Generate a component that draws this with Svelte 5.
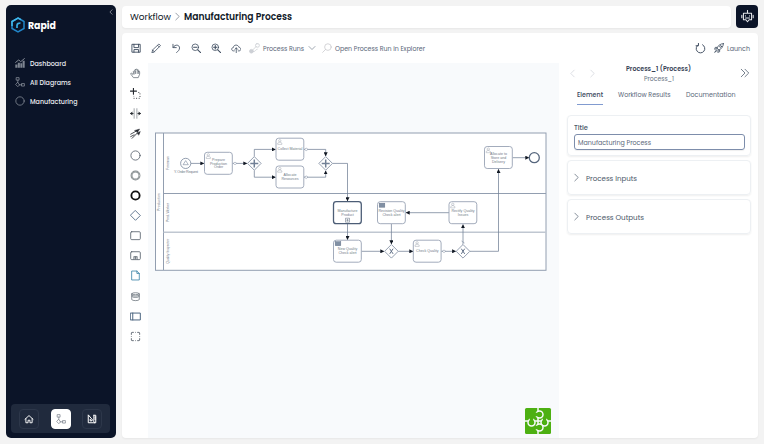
<script>
  const nav = [
    { icon: 'chart', label: 'Dashboard', w: 36 },
    { icon: 'flow', label: 'All Diagrams', w: 41 },
    { icon: 'ring', label: 'Manufacturing', w: 47.5 }
  ];
  const tools = ['save', 'pencil', 'undo', 'zoomout', 'zoomin', 'cloud'];
  const palette = ['hand', 'lasso', 'space', 'connect', 'start', 'mid', 'end', 'gateway', 'task', 'sub', 'doc', 'store', 'pool', 'group'];
  const tasks = [
    { x: 204.5, y: 152.3, k: 'user', t: ['Prepare', 'Production', 'Order'] },
    { x: 276, y: 138.2, k: 'user', t: ['Collect Material'] },
    { x: 276, y: 166, k: 'user', t: ['Allocate', 'Resources'] },
    { x: 484.5, y: 146.5, k: 'user', t: ['Allocate to', 'Store and', 'Delivery'] },
    { x: 333.5, y: 201.7, k: 'call', t: ['Manufacture', 'Product'] },
    { x: 377.5, y: 201.7, k: 'rule', t: ['Revision Quality', 'Check alert'] },
    { x: 449, y: 201.7, k: 'user', t: ['Rectify Quality', 'Issues'] },
    { x: 333.5, y: 240.2, k: 'rule', t: ['New Quality', 'Check alert'] },
    { x: 413.3, y: 240.2, k: 'user', t: ['Check Quality'] }
  ];
  const flows = [
    'M191 163.4H204', 'M232.5 163.4H247', 'M254.3 156.4V149.4H275.5', 'M254.3 170.4V177.2H275.5',
    'M304 149.4H325.7V156', 'M304 177.2H325.7V170.8', 'M332.7 163.4H347.5V201', 'M347.5 224V239.7',
    'M361.5 251.3H384', 'M391.4 224V244', 'M398.4 251.3H413', 'M441.3 251.3H455.8', 'M463 244.3V224.5',
    'M449 212.7H406', 'M470 251.3H498.5V169.3', 'M512.5 157.7H529'
  ];
  const gates = [
    { x: 254.3, y: 163.4, p: true }, { x: 325.7, y: 163.4, p: true },
    { x: 391.4, y: 251.3, p: false }, { x: 463, y: 251.3, p: false }
  ];
</script>

{#snippet icon(name, size = 12)}
  <svg class="icon i-{name}" width={size} height={size} viewBox="0 0 16 16" fill="none" stroke="currentColor" stroke-width="1.2" stroke-linejoin="round" stroke-linecap="round">
    {#if name === 'chart'}
      <path d="M1 7l5-4 3 3 6-5" stroke-width="1.500" /><path d="M.5 10.500h3.300v5H.5zM4.500 7.500h3.300v8H4.500zM8.500 8.500h3v7h-3zM12.200 4.500h3.300v11h-3.300z" fill="currentColor" stroke="none" opacity=".9" />
    {:else if name === 'flow'}
      <rect x="2.500" y="1" width="4" height="4" /><path d="M4.500 5v4M6.500 12.500H11" /><path d="m4.500 9 3 3.500-3 3-3-3z" /><rect x="11" y="10.500" width="4" height="4" />
    {:else if name === 'ring' || name === 'start'}
      <circle cx="8" cy="8" r="6.700" />
    {:else if name === 'mid'}
      <circle cx="8" cy="8" r="5.800" stroke-width="2.800" /><circle cx="8" cy="8" r="5.700" stroke="#dfe2e2" stroke-width=".5" />
    {:else if name === 'end'}
      <circle cx="8" cy="8" r="6" stroke-width="2.700" />
    {:else if name === 'save'}
      <path d="M2 2h12v12H2zM4.500 2v5h7V2M4.500 14v-4h7v4" stroke-width="1.400" />
    {:else if name === 'pencil'}
      <path d="m1.500 14.500 1-4L12 1.500l2.500 2.500-9.500 9.500zM10 3.500 12.500 6M2.500 10.500 5 13.500" />
    {:else if name === 'undo'}
      <path d="M3 2v5h5M3.300 6.500C7 1 13 3 13 7.500c0 3-2 5-4.500 7" stroke-width="1.300" />
    {:else if name === 'zoomout' || name === 'zoomin'}
      <circle cx="6.500" cy="6.500" r="5" /><path d="m10.300 10.300 4.700 4.700M4 6.500h5" stroke-width="1.600" />{#if name === 'zoomin'}<path d="M6.500 4v5" stroke-width="1.600" />{/if}
    {:else if name === 'cloud'}
      <path d="M5 12H3.500C0 11.500.5 7 3.500 7 4 2 11 2 12 6.500c4 .5 4 5.500 0 5.500h-1M8 15V7.500M5.800 9.700 8 7.500l2.200 2.200" />
    {:else if name === 'link'}
      <circle cx="3.500" cy="12" r="2.700" fill="currentColor" /><path d="m5.500 10 5-5" /><rect x="9.500" y="1" width="5.500" height="5" rx="2" /><path d="M7 12.500c3 0 2-3 5-3.500" />
    {:else if name === 'search'}
      <circle cx="9.500" cy="6.500" r="5.300" /><path d="m5.500 10.500-4.500 4.500" />
    {:else if name === 'refresh'}
      <path d="M5 2.500A6.300 6.300 0 1 0 11 2.500M5 .5v3.500H1.500" stroke-width="1.400" />
    {:else if name === 'rocket'}
      <path d="M15 1C10 1 7 4 4.500 8L8 11.500C12 9 15 6 15 1zM5 7H2L1 10l4-1M9 11v3l-3 1 1-4M4 11l-3 4 4-3" stroke-width="1.300" /><circle cx="10.500" cy="5.500" r="1.500" />
    {:else if name === 'hand'}
      <path d="M4 9 2 7.500C.5 7.500 1 9 2 10l3 4h7l2-5V5.500c0-1-1.500-1-1.500 0V3.500c0-1.200-1.700-1.200-1.700 0V2.500c0-1.300-2-1.300-2 0V3c0-1.300-2-1.300-2 .2V5c-1-1.300-2.500-.5-2 1zM8 4v4M10.500 4v4M12.500 5v3M6 6v3" stroke-width="1" />
    {:else if name === 'lasso'}
      <path d="M5 0v9M.5 4.500h9" stroke-width="1.600" /><path d="M12 6.500h2.500V15H5.500v-3.500" stroke-dasharray="1.500 2.300" stroke-linecap="butt" />
    {:else if name === 'space'}
      <path d="M6 1v14M10 1v14" stroke="#8d9298" stroke-width="1.200" /><path d="M4.500 8H1M11.500 8H15" stroke-width="1.300" /><path d="M0 8l3.500-3v6zM16 8l-3.500-3v6z" fill="currentColor" stroke="none" />
    {:else if name === 'connect'}
      <path d="m1 9 9-5M3 15l9-9M1 12.500l5-2.500" /><path d="m7 3.500 7-2-3 4.500zM10.500 7.500l4.500-2.500-2 5z" fill="currentColor" stroke-width=".6" />
    {:else if name === 'gateway'}
      <path d="m8 1 7 7-7 7-7-7z" />
    {:else if name === 'task' || name === 'sub'}
      <rect x="1" y="2.500" width="14" height="11.500" rx="1.500" />{#if name === 'sub'}<path d="M5.500 13.500V9.500h5v4M8 10v3M6.500 11.500h3" stroke-width="1" />{/if}
    {:else if name === 'doc'}
      <path d="M3 1.500h7L13.500 5v9.500H3zM10 1.500V5h3.500" />
    {:else if name === 'store'}
      <path d="M2.500 4v8.500c1 2 10 2 11 0V4c-1-2-10-2-11 0c1 2 10 2 11 0M2.500 6c1 2 10 2 11 0M2.500 8c1 2 10 2 11 0" stroke-width="1" />
    {:else if name === 'pool'}
      <path d="M1 3h14v10H1zM4 3v10" stroke-width="1.400" />
    {:else if name === 'group'}
      <path d="M2 5.500V3q0-1 1-1h2.500M10.500 2H13q1 0 1 1v2.500M14 10.500V13q0 1-1 1h-2.500M5.500 14H3q-1 0-1-1v-2.500M7.500 2h1M7.500 14h1M2 7.500v1M14 7.500v1" stroke-width="1.300" stroke-linecap="butt" />
    {:else if name === 'home'}
      <path d="m1.500 8.500 6.500-6 6.500 6M3 7.500V14h3.500v-4h3v4H13V7.500" stroke-width="1.500" />
    {:else if name === 'design'}
      <path d="M2 2v12h10zM5 9v2h2zM11 2h3v12h-2M11 2v8M12.500 5H14M12.500 8H14" stroke-width="1.600" />
    {:else if name === 'robot'}
      <path d="M8 .5V4M3 4h10v8h-3l-2 2.500L6 12H3zM1 6.500v3M15 6.500v3M5.500 7v.5M10.500 7v.5M5.500 9.800h5" stroke-width="1.300" />
    {:else if name === 'right'}
      <path d="m5 2 6 6-6 6" />
    {:else if name === 'left'}
      <path d="m11 2-6 6 6 6" />
    {:else if name === 'down'}
      <path d="m2 5 6 6 6-6" />
    {:else if name === 'double'}
      <path d="m2 2 6 6-6 6M8 2l6 6-6 6" />
    {/if}
  </svg>
{/snippet}

{#snippet label(text, w, size, weight = 400)}
  <svg class="label" width={w} height="14" style:font-size="{size}px" style:font-weight={weight}><text x="0" y="10" textLength={w} lengthAdjust="spacingAndGlyphs">{text}</text></svg>
{/snippet}

<div class="app">
  <aside>
    <div class="brand">
      <svg width="14" height="16" viewBox="0 0 14 16" fill="none"><path d="M7 1 13 4.500v7L7 15l-6-3.500v-7z" stroke="#2185c9" stroke-width="1.500" /><path d="M1 9V4.500L7 1l3 1.700" stroke="#42b9eb" stroke-width="1.500" /><path d="M6 11V8.500C6 6.500 7.500 6 9.500 6" stroke="#36aee6" stroke-width="1.700" /></svg>
      {@render label('Rapid', 28, 10.500, 700)}
      <span class="collapse">{@render icon('left', 6)}</span>
    </div>
    <nav>
      {#each nav as n}
        <div class="navitem">{@render icon(n.icon, 10)}{@render label(n.label, n.w, 7.400, 500)}</div>
      {/each}
    </nav>
    <div class="dock">
      <span>{@render icon('home', 10)}</span>
      <span class="active">{@render icon('flow', 10)}</span>
      <span>{@render icon('design', 10)}</span>
    </div>
  </aside>

  <div class="content">
    <header>
      <div class="crumbs">{@render label('Workflow', 41, 9.500)}{@render icon('right', 9)}{@render label('Manufacturing Process', 108, 9.600, 600)}</div>
      <div class="bot">{@render icon('robot', 13)}</div>
    </header>

    <main>
      <div class="toolbar">
        <div class="tools">{#each tools as t}{@render icon(t, 10.500)}{/each}</div>
        <div class="runs">{@render icon('link', 11)}{@render label('Process Runs', 41, 7)}{@render icon('down', 8)}</div>
        <div class="open">{@render icon('search', 10)}{@render label('Open Process Run in Explorer', 90, 7)}</div>
        <div class="launch">{@render icon('refresh', 11)}{@render icon('rocket', 10)}{@render label('Launch', 23, 7)}</div>
      </div>
      <div class="work">
        <div class="palette">{#each palette as p}<span>{@render icon(p, 11)}</span>{/each}</div>
        <div class="canvas">
          <svg width="411" height="375" viewBox="148 63 411 375">
            <defs><marker id="arrow" viewBox="0 0 6 6" refX="5.500" refY="3" markerUnits="userSpaceOnUse" markerWidth="4" markerHeight="4" orient="auto"><path d="M0 0 6 3 0 6z" fill="#101722" /></marker></defs>
            <g fill="#fff" stroke="#929eb0">
              <rect x="155.500" y="133" width="390.500" height="137.300" />
              <path d="M163.500 133v137M163.500 193.500H546" />
              <path d="M163.500 232.200H546" stroke-width="1.500" stroke="#c0c7d1" />
            </g>
            <g class="lane"><text transform="translate(160.300 202) rotate(-90)" textLength="18">Production</text><text transform="translate(168.900 163) rotate(-90)" textLength="14">Foreman</text><text transform="translate(168.900 212.500) rotate(-90)" textLength="19">Prod. Worker</text><text transform="translate(168.900 251.300) rotate(-90)" textLength="25">Quality Inspector</text></g>
            {#each flows as d}<path {d} fill="none" stroke="#718096" stroke-width=".75" marker-end="url(#arrow)" />{/each}
            {#each tasks as t}
              <rect x={t.x} y={t.y} width="27.800" height="22" rx="2.700" fill="#fff" stroke={t.k === 'call' ? '#4c5d76' : '#98a3b4'} stroke-width={t.k === 'call' ? 1.300 : .9} />
              {#if t.k === 'user'}
                <g fill="none" stroke="#8a929e" stroke-width=".4"><circle cx={t.x + 3.800} cy={t.y + 2.600} r="1.200" /><path d="M{t.x + 1.700} {t.y + 6.200}v-1.300q2.100-2.300 4.200 0v1.300z" /></g>
              {:else if t.k === 'rule'}
                <rect x={t.x + 1.700} y={t.y + 1.500} width="5.600" height="4" fill="#8190a4" stroke="#66768c" stroke-width=".5" />
              {:else}
                <path d="M{t.x + 12} {t.y + 16.500}h4v4h-4zM{t.x + 14} {t.y + 17.200}v2.600M{t.x + 12.700} {t.y + 18.500}h2.600" fill="#fff" stroke="#566477" stroke-width=".5" />
              {/if}
              {#each t.t as line, i}<text class="step" x={t.x + 14} y={t.y + 12.200 + (i - (t.t.length - 1) / 2) * 3.900}>{line}</text>{/each}
            {/each}
            {#each gates as g}
              <path d="M{g.x - 6.800} {g.y}l6.800-6.800 6.800 6.800-6.800 6.800z" fill="#fff" stroke="#78879c" stroke-width=".8" />
              {#if g.p}<path d="M{g.x - 4} {g.y}h8M{g.x} {g.y - 4}v8" stroke="#718096" stroke-width="1.500" />{:else}<path d="M{g.x - 1.700} {g.y - 2.600}l3.400 5.200M{g.x + 1.700} {g.y - 2.600}l-3.400 5.200" stroke="#627188" stroke-width="1" />{/if}
            {/each}
            <g fill="#fff" stroke="#78879c" stroke-width=".8">
              <circle cx="185.700" cy="163.400" r="5.100" /><path d="m185.700 160.600 2.600 4.100h-5.200z" stroke-width=".6" />
              <circle cx="534.300" cy="157.700" r="5" stroke="#56667d" stroke-width="1.300" />
              {#each [[235, 163.400], [306.200, 149.400], [306.200, 177.200], [444, 251.300]] as c}<path d="M{c[0] - 1.800} {c[1]}l1.800-1.300 1.800 1.300-1.800 1.300z" stroke-width=".5" />{/each}
              <path d="m461.500 241 3 2" stroke-width=".6" />
            </g>
            <text class="step" x="186" y="172.600" textLength="24">Y. Order Request</text>
          </svg>
          <svg class="mark" width="28" height="28" viewBox="0 0 28 28">
            <rect x="1" y="1" width="26" height="26" rx="1.500" fill="#4db012" />
            <path d="M14 1v26M1 14h26" stroke="#f8fafc" stroke-width="1.500" />
            <g fill="#4db012" stroke="#f8fafc" stroke-width="1.500">
              <circle cx="15.500" cy="7.500" r="3.500" /><circle cx="7.500" cy="15.500" r="3.500" />
              <circle cx="20.500" cy="15.500" r="3.500" /><circle cx="15.500" cy="20.500" r="3.500" />
            </g>
            <path d="M11 5.800h4v3.400h-4zM5.800 11h3.400v4H5.800zM18.800 11h3.400v4h-3.400zM11 18.800h4v3.400h-4z" fill="#4db012" />
          </svg>
        </div>
        <section>
          <div class="title">
            <span class="arrows">{@render icon('left', 9)}{@render icon('right', 9)}</span>
            <div class="names">{@render label('Process_1 (Process)', 65, 7, 600)}{@render label('Process_1', 30, 6.500)}</div>
            {@render icon('double', 10)}
          </div>
          <div class="tabs"><span class="on">{@render label('Element', 26, 7, 500)}</span><span>{@render label('Workflow Results', 52.500, 7)}</span><span>{@render label('Documentation', 49.500, 7)}</span></div>
          <div class="card form">{@render label('Title', 14, 7, 500)}<div class="field">{@render label('Manufacturing Process', 73, 7)}</div></div>
          <div class="card fold">{@render icon('right', 9)}{@render label('Process Inputs', 51, 7.600)}</div>
          <div class="card fold">{@render icon('right', 9)}{@render label('Process Outputs', 58, 7.600)}</div>
        </section>
      </div>
    </main>
  </div>
</div>

<style>
  :global(body) { margin: 0; background: #f3f3f3; }
  * { box-sizing: border-box; }
  .app { width: 764px; height: 444px; padding: 5px 6px 6px; display: flex; gap: 6px; overflow: hidden; font-family: Poppins, Inter, "Open Sans", sans-serif; color: #4a5768; }
  svg { display: block; flex: none; }
  .label { overflow: visible; fill: currentColor; }
  aside { width: 110px; background: #0b1428; border-radius: 5px; display: flex; flex-direction: column; padding: 0 6px 5px 5px; }
  .brand { display: flex; align-items: center; height: 16px; margin-top: 12px; gap: 3px; color: #fff; }
  .brand .label { margin-top: 1px; }
  .collapse { margin-left: auto; margin-top: -26px; margin-right: -4px; }
  nav { margin-top: 21px; padding-left: 4px; }
  .navitem { height: 18.800px; display: flex; align-items: center; gap: 4.500px; color: #eceef2; }
  .navitem .icon { color: #8b919c; }
  .dock { margin-top: auto; height: 29px; background: #202a3d; border-radius: 4px; display: flex; align-items: center; justify-content: space-between; padding: 0 8px 0 8px; color: #fff; }
  .dock span { width: 20px; height: 20px; border: 1px solid #2d374a; border-radius: 4px; display: grid; place-items: center; }
  .dock .active { background: #fff; color: #7f8590; border-color: #fff; }
  .content { flex: 1; min-width: 0; display: flex; flex-direction: column; gap: 5px; }
  header { height: 23px; display: flex; justify-content: space-between; }
  .crumbs { width: 609px; height: 22px; margin-top: 1px; background: #fff; border-radius: 4px; display: flex; align-items: center; padding-left: 8px; color: #101827; box-shadow: 0 1px 2px #0000000d; }
  .crumbs .icon { margin: -1px 2px 0 2px; color: #68717e; }
  .crumbs .label { margin-top: -1px; }
  .bot { width: 22px; height: 23px; background: #0b1428; border-radius: 4px; color: #e5e7eb; display: grid; place-items: center; }
  main { flex: 1; min-height: 0; background: #fff; border-radius: 4px; overflow: hidden; display: flex; flex-direction: column; box-shadow: 0 1px 2px #0000000d; }
  .toolbar { height: 30px; flex: none; display: flex; align-items: center; padding: 0 8px 0 8.500px; color: #3f4d60; }
  .toolbar .label { color: #596678; margin-top: -1px; }
  .tools { display: flex; gap: 9.500px; }
  .runs { display: flex; align-items: center; gap: 3px; margin-left: 7.500px; color: #5e6b7c; }
  .runs .i-link { color: #cdd0d5; }
  .runs .i-down { margin-left: 1px; }
  .open { display: flex; align-items: center; gap: 3px; margin-left: 6px; }
  .open .i-search { color: #c7c7cb; }
  .launch { margin-left: auto; display: flex; align-items: center; gap: 3px; }
  .launch .i-refresh { margin-right: 5px; }
  .work { flex: 1; display: flex; min-height: 0; }
  .palette { width: 26px; flex: none; display: flex; flex-direction: column; align-items: center; color: #56606b; }
  .palette span { height: 20.100px; display: grid; place-items: center; }
  .palette span:nth-child(4) { margin-bottom: 2px; }
  .palette .i-lasso, .palette .i-space, .palette .i-connect { color: #24282e; }
  .palette .i-end { color: #111; }
  .palette .i-mid { color: #858c8e; }
  .palette .i-gateway, .palette .i-pool { color: #46607c; }
  .palette .i-doc { color: #3b84a8; }
  .canvas { width: 411px; flex: none; background: #f8fafc; position: relative; }
  .mark { position: absolute; left: 376px; top: 344px; }
  .lane text, .step { font: 3.600px "Liberation Sans", Arial, sans-serif; fill: #707a87; text-anchor: middle; }
  section { flex: 1; min-width: 0; padding: 0 7px 0 8px; display: flex; flex-direction: column; }
  .title { height: 20px; display: flex; align-items: center; justify-content: space-between; padding: 0 1.500px 0 1px; }
  .arrows { display: flex; gap: 11px; color: #ccd0d6; }
  .names { display: flex; flex-direction: column; align-items: center; margin-top: -5px; margin-right: 19px; color: #667181; }
  .names .label { height: 10px; }
  .names .label:first-child { color: #354154; }
  .tabs { display: flex; height: 22px; gap: 15px; padding-left: 10px; color: #5b687a; }
  .tabs span { padding-top: 4px; height: 22px; }
  .tabs .on { border-bottom: 1px solid #819bd0; color: #35445a; }
  .card { border: 1px solid #edf0f3; border-radius: 4px; box-shadow: 0 1px 2px #0001; width: 184px; margin-bottom: 4px; }
  .form { margin-top: 10px; height: 41px; padding: 4px 5px 5px 6px; }
  .form > .label { margin-left: 0; height: 14px; }
  .field { height: 16px; border: 1px solid #7d8dab; border-radius: 3px; padding-left: 3px; display: flex; align-items: center; color: #5b687a; box-shadow: 0 1px 1px #0001; }
  .field .label { margin-top: -1px; }
  .fold { height: 35px; display: flex; align-items: center; gap: 5px; padding-left: 4px; }
</style>
